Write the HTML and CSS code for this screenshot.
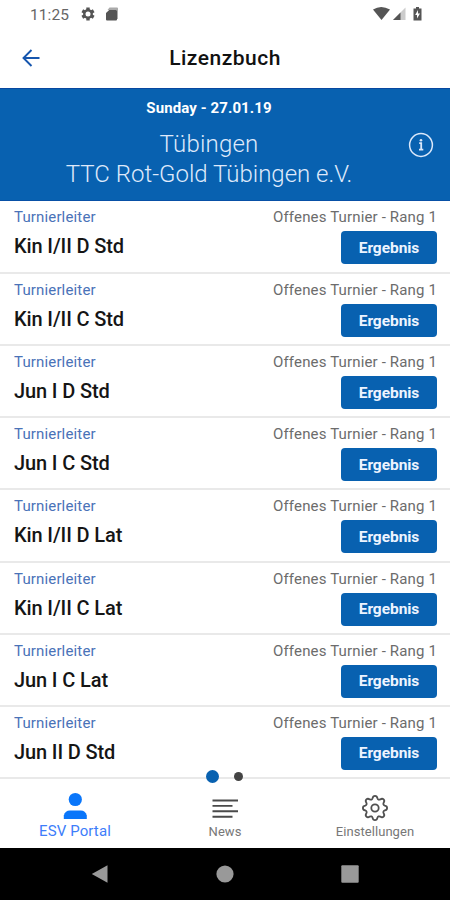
FILE: index.html
```html
<!DOCTYPE html>
<html lang="de">
<head>
    <meta charset="UTF-8">
    <meta name="viewport" content="width=device-width, initial-scale=1.0">
    <title>Lizenzbuch</title>
    <link rel="stylesheet" href="styles.css">
</head>
<body>
    <div id="statusbar">
        <span class="time">11:25</span>
        <svg class="status-gear" viewBox="0 0 14 14">
            <path d="M7 .4v13.200M1.300 3.700l11.400 6.600M1.300 10.300l11.400-6.600" stroke="#555" stroke-width="3.400"/>
            <circle cx="7" cy="7" r="4.900" fill="#555"/>
            <circle cx="7" cy="7" r="2.500" fill="#fff"/>
        </svg>
        <svg class="status-card" viewBox="0 0 12 14">
            <path d="M3.500 .5H11q1 0 1 1V12h-1V3H1.500z" fill="#aaa"/>
            <path d="M3.200 3H10q1 0 1 1v8.500q0 1-1 1H1q-1 0-1-1V6z" fill="#555"/>
        </svg>
        <svg class="status-right" viewBox="0 0 50 16">
            <path d="M0 3.500q8-5 17 0L8.500 14z" fill="#555"/>
            <path d="M32.500 1.500v12.500H20z" fill="#ccc"/>
            <path d="M27.500 6.500v7.500H20z" fill="#555"/>
            <path d="M43 1h3v1.500h2.500V14.500h-8V2.500H43z" fill="#555"/>
            <path d="M45 4l-2.800 5h1.800v3.500L47 7.500H45z" fill="#fff"/>
        </svg>
    </div>

    <header id="titlebar">
        <svg class="back" viewBox="0 0 18 18">
            <path d="M17.500 9H2M9.500 1L1.500 9L9.500 17" fill="none" stroke="#1656ae" stroke-width="1.900"/>
        </svg>
        <h1>Lizenzbuch</h1>
    </header>

    <section id="event">
        <p class="date">Sunday - 27.01.19</p>
        <p class="place">Tübingen</p>
        <p class="club">TTC Rot-Gold Tübingen e.V.</p>
        <svg class="info" viewBox="0 0 26 26">
            <circle cx="13" cy="13" r="11.400" fill="none" stroke="#dbe8fa" stroke-width="1.500"/>
            <path d="M11.200 11.200h2v6.500M11 17.700h4.300" fill="none" stroke="#dbe8fa" stroke-width="1.800"/>
            <circle cx="13" cy="8.200" r="1.300" fill="#dbe8fa"/>
        </svg>
    </section>

    <main id="list">
        <div class="row">
            <div class="left"><p class="role">Turnierleiter</p><h2>Kin I/II D Std</h2></div>
            <div class="right"><p class="rank">Offenes Turnier - Rang 1</p><button>Ergebnis</button></div>
        </div>
        <div class="row">
            <div class="left"><p class="role">Turnierleiter</p><h2>Kin I/II C Std</h2></div>
            <div class="right"><p class="rank">Offenes Turnier - Rang 1</p><button>Ergebnis</button></div>
        </div>
        <div class="row">
            <div class="left"><p class="role">Turnierleiter</p><h2>Jun I D Std</h2></div>
            <div class="right"><p class="rank">Offenes Turnier - Rang 1</p><button>Ergebnis</button></div>
        </div>
        <div class="row">
            <div class="left"><p class="role">Turnierleiter</p><h2>Jun I C Std</h2></div>
            <div class="right"><p class="rank">Offenes Turnier - Rang 1</p><button>Ergebnis</button></div>
        </div>
        <div class="row">
            <div class="left"><p class="role">Turnierleiter</p><h2>Kin I/II D Lat</h2></div>
            <div class="right"><p class="rank">Offenes Turnier - Rang 1</p><button>Ergebnis</button></div>
        </div>
        <div class="row">
            <div class="left"><p class="role">Turnierleiter</p><h2>Kin I/II C Lat</h2></div>
            <div class="right"><p class="rank">Offenes Turnier - Rang 1</p><button>Ergebnis</button></div>
        </div>
        <div class="row">
            <div class="left"><p class="role">Turnierleiter</p><h2>Jun I C Lat</h2></div>
            <div class="right"><p class="rank">Offenes Turnier - Rang 1</p><button>Ergebnis</button></div>
        </div>
        <div class="row">
            <div class="left"><p class="role">Turnierleiter</p><h2>Jun II D Std</h2></div>
            <div class="right"><p class="rank">Offenes Turnier - Rang 1</p><button>Ergebnis</button></div>
        </div>
        <div class="dots"><span class="dot active"></span><span class="dot"></span></div>
    </main>

    <nav id="tabs">
        <div class="tab selected">
            <svg viewBox="0 0 28 28">
                <circle cx="14.300" cy="7.500" r="6.600" fill="#0a76fa"/>
                <path d="M2.800 27v-3.500q1.500-5 6-5h11q4.500 0 6 5V27z" fill="#0a76fa"/>
            </svg>
            <span>ESV Portal</span>
        </div>
        <div class="tab">
            <svg viewBox="0 0 28 28">
                <path d="M1.500 8.500h25.500M1.500 13.900h20M1.500 19.300h25.500M1.500 24.700h20" stroke="#4a4a4a" stroke-width="1.900"/>
            </svg>
            <span>News</span>
        </div>
        <div class="tab">
            <svg viewBox="0 0 28 28">
                <path fill="none" stroke="#505050" stroke-width="1.800" stroke-linejoin="round" d="M11.600 4.200Q12 1.900 14 1.900T16.400 4.200Q17.200 6.300 19.200 5.400Q21.200 4 22.600 5.400T22.600 8.800Q21.700 10.800 23.800 11.600Q26.100 12 26.100 14T23.800 16.400Q21.700 17.200 22.600 19.200Q24 21.200 22.600 22.600T19.200 22.600Q17.200 21.700 16.400 23.800Q16 26.100 14 26.100T11.600 23.800Q10.800 21.700 8.800 22.600Q6.800 24 5.400 22.600T5.400 19.200Q6.300 17.200 4.200 16.400Q1.900 16 1.900 14T4.200 11.600Q6.300 10.800 5.400 8.800Q4 6.800 5.400 5.400T8.800 5.400Q10.800 6.300 11.600 4.200Z"/>
                <circle cx="14" cy="14" r="3.700" fill="none" stroke="#505050" stroke-width="1.800"/>
            </svg>
            <span>Einstellungen</span>
        </div>
    </nav>

    <footer id="navbar">
        <svg viewBox="0 0 20 20"><path d="M1.800 10L17.500 1.300v17.400z" fill="#999"/></svg>
        <svg viewBox="0 0 20 20"><circle cx="10" cy="10" r="8.600" fill="#999"/></svg>
        <svg viewBox="0 0 20 20"><rect x="1.300" y="1.300" width="17.400" height="17.400" rx="1" fill="#999"/></svg>
    </footer>
</body>
</html>
```
FILE: styles.css
```css
* {
    padding: 0;
    margin: 0;
    box-sizing: border-box;
}
body {
    width: 450px;
    height: 900px;
    overflow: hidden;
    display: flex;
    flex-direction: column;
    background: #fff;
    font-family: Roboto, sans-serif;
}
#statusbar {
    height: 28px;
    padding: 0 27px 0 30px;
    display: flex;
    align-items: center;
    color: #666;
}
.time {
    width: 51px;
    font-size: 15.5px;
    letter-spacing: 0.1px;
    margin-top: 1px;
}
.status-gear {
    width: 14px;
    height: 14px;
}
.status-card {
    width: 12px;
    height: 14px;
    margin-left: 11px;
}
.status-right {
    width: 50px;
    height: 16px;
    margin-left: auto;
}
#titlebar {
    height: 60px;
    display: grid;
    grid-template-columns: 54px 1fr 54px;
    align-items: center;
}
.back {
    width: 18px;
    height: 18px;
    margin-left: 22px;
}
#titlebar h1 {
    font-size: 21px;
    font-weight: 500;
    letter-spacing: 0.5px;
    text-align: center;
    color: #111;
}
#event {
    position: relative;
    height: 113px;
    padding-top: 10px;
    background: #0861b0;
    border-top: 1px solid #0848a0;
    border-bottom: 1px solid #0850a6;
    text-align: center;
    color: #dfe9fb;
}
.date {
    font-size: 15px;
    line-height: 18px;
    font-weight: 700;
    letter-spacing: 0.1px;
    color: #fff;
    margin-right: 32px;
}
.place,
.club {
    font-size: 24px;
    line-height: 30px;
    font-weight: 300;
    margin-right: 32px;
}
.place {
    margin-top: 12px;
    letter-spacing: 0.2px;
}
.info {
    position: absolute;
    right: 16px;
    top: 43px;
    width: 26px;
    height: 26px;
}
#list {
    position: relative;
    height: 578px;
}
.row {
    height: 72.15px;
    padding: 7px 13px 0 14px;
    display: flex;
    justify-content: space-between;
    border-bottom: 2px solid #e9e9e9;
}
.row:first-child {
    height: 73px;
}
.role,
.rank {
    font-size: 15px;
    line-height: 18px;
    letter-spacing: 0.15px;
}
.role {
    color: #4a72b8;
}
.rank {
    color: #6c6c6c;
}
.row h2 {
    margin-top: 8px;
    font-size: 20px;
    line-height: 24px;
    font-weight: 500;
    letter-spacing: -0.12px;
    color: #151515;
}
.right {
    display: flex;
    flex-direction: column;
    align-items: flex-end;
}
.row button {
    width: 96px;
    height: 33px;
    margin-top: 5px;
    border: none;
    border-radius: 4px;
    background: #0861b0;
    color: #edf4ff;
    font-family: inherit;
    font-size: 15.5px;
    font-weight: 700;
    letter-spacing: -0.05px;
}
.dots {
    position: absolute;
    left: 206px;
    bottom: -4px;
    display: flex;
    align-items: center;
    gap: 15px;
}
.dot {
    width: 9px;
    height: 9px;
    border-radius: 50%;
    background: #444;
}
.dot.active {
    width: 13px;
    height: 13px;
    background: #0861b0;
}
#tabs {
    height: 69px;
    padding-top: 13px;
    display: grid;
    grid-template-columns: repeat(3, 1fr);
}
.tab {
    display: flex;
    flex-direction: column;
    align-items: center;
    color: #777;
    font-size: 13px;
}
.tab svg {
    width: 28px;
    height: 28px;
}
.tab span {
    margin-top: 4px;
    line-height: 16px;
    letter-spacing: 0.05px;
}
.tab:last-child svg {
    margin-top: 2px;
}
.tab:last-child span {
    margin-top: 2px;
}
.selected {
    color: #3d7dfa;
    font-size: 15px;
}
.tab.selected span {
    margin-top: 3px;
    letter-spacing: 0.1px;
}
#navbar {
    height: 52px;
    padding: 0 90px;
    display: flex;
    align-items: center;
    justify-content: space-between;
    background: #000;
}
#navbar svg {
    width: 20px;
    height: 20px;
}
```
